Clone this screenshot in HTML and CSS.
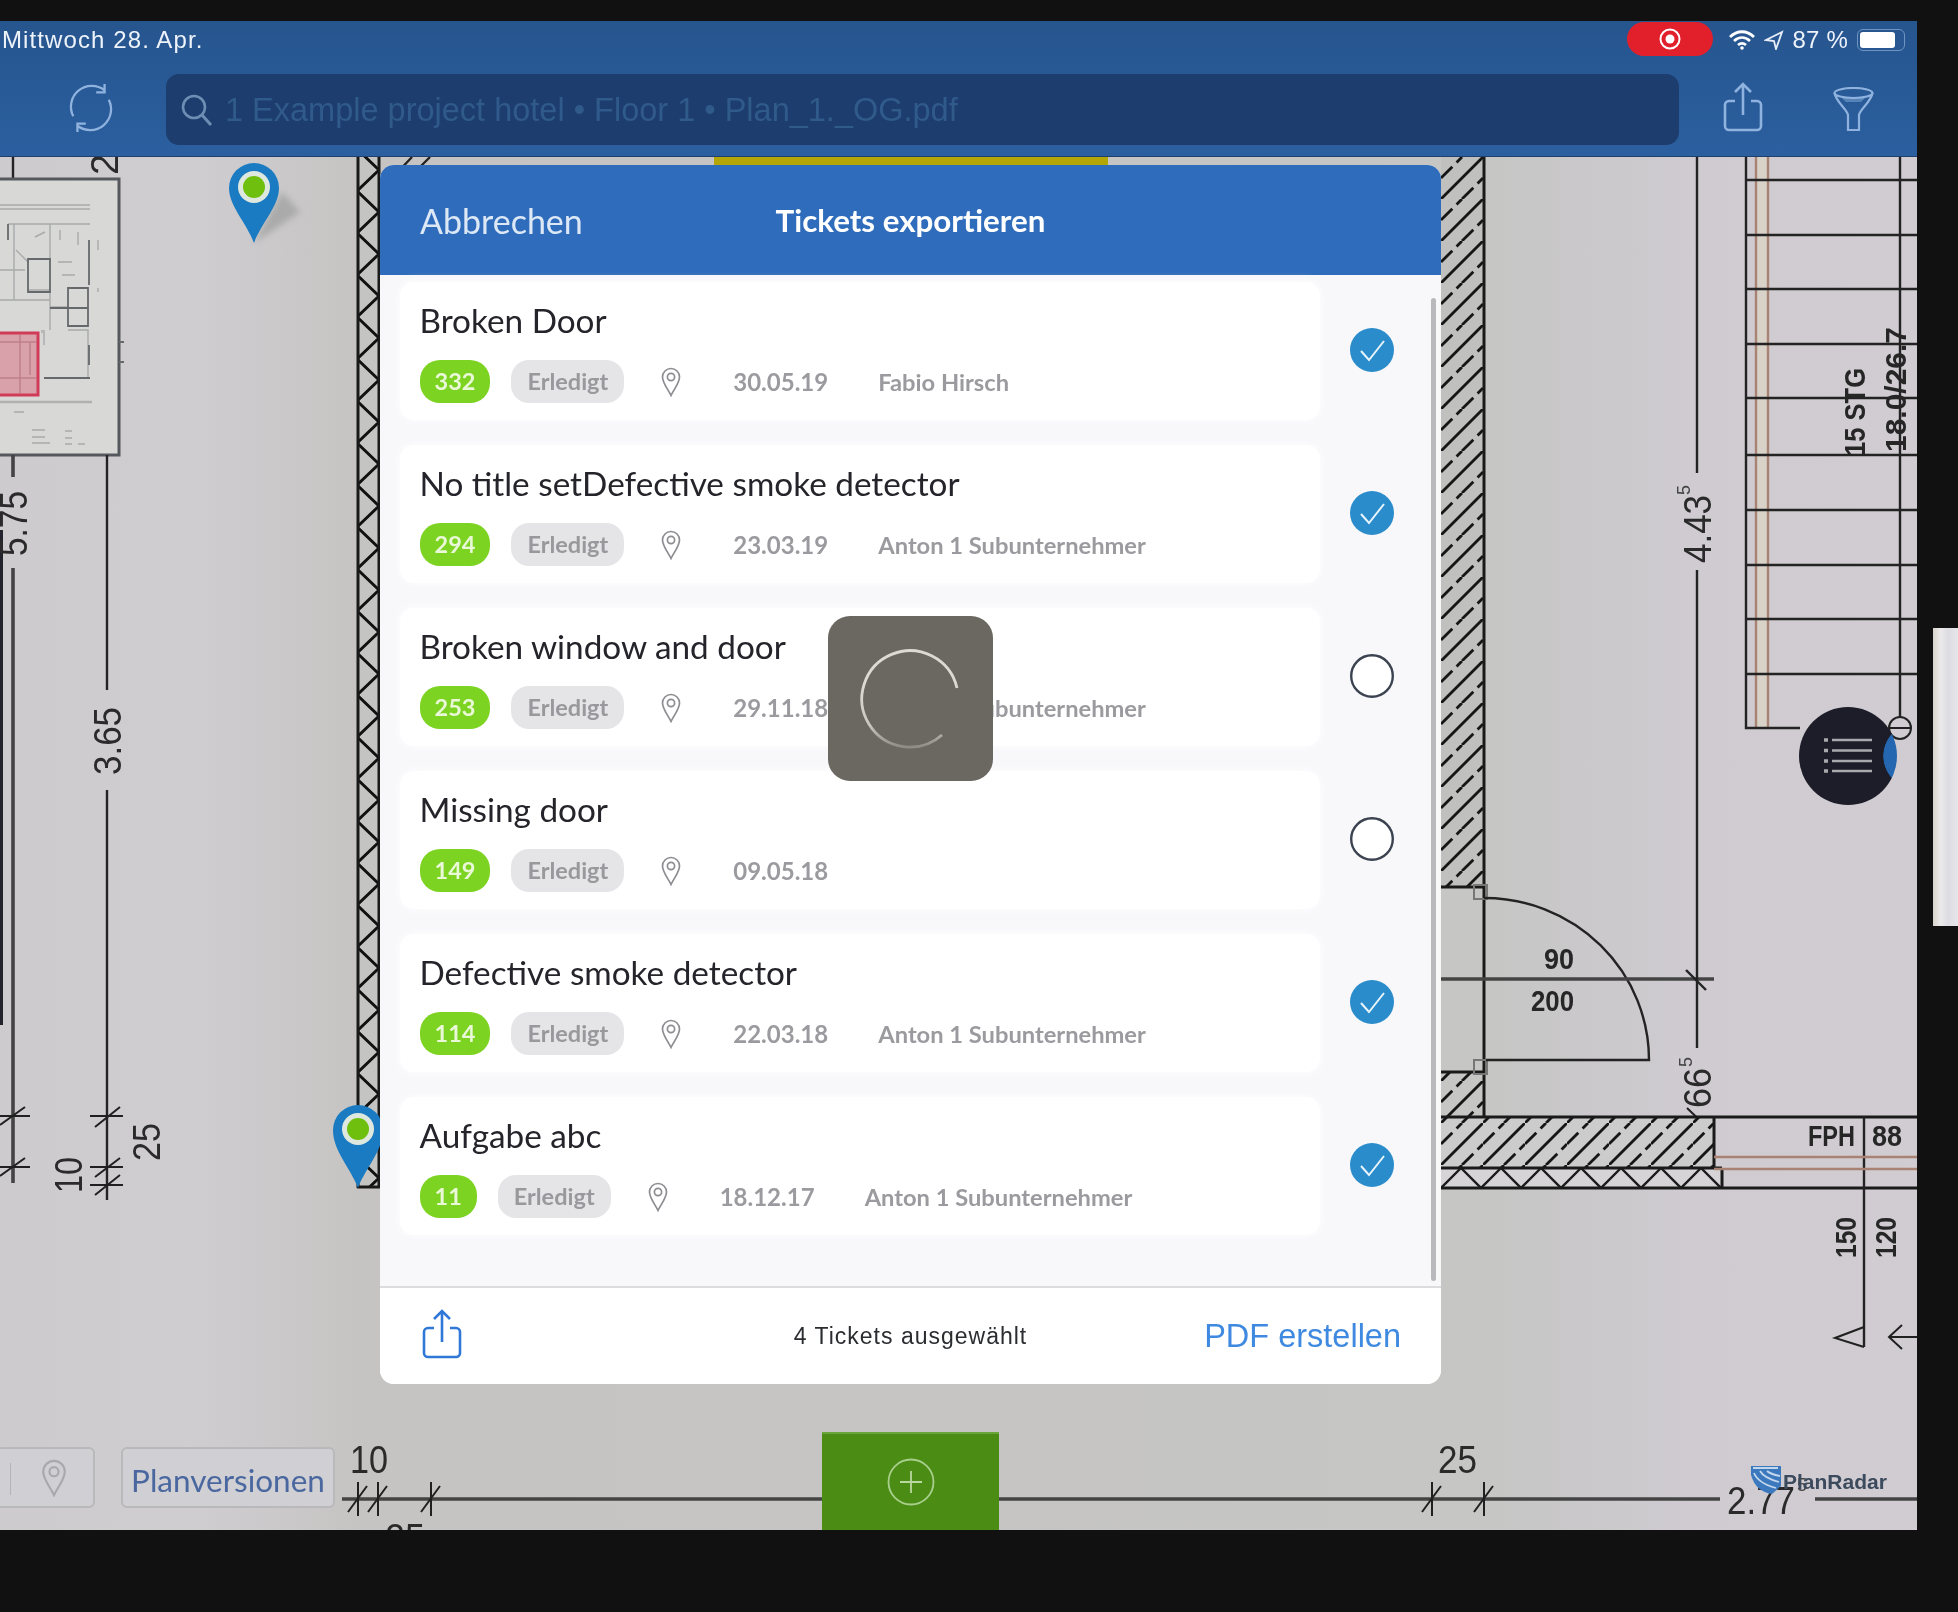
FILE: index.html
```html
<!DOCTYPE html>
<html lang="de">
<head>
<meta charset="utf-8">
<title>Tickets exportieren</title>
<link rel="stylesheet" href="styles.css">
</head>
<body class="page">
<svg class="defs" width="0" height="0" aria-hidden="true">
  <defs>
    <symbol id="i-share" viewBox="0 0 40 50">
      <path d="M12 19H6a4 4 0 0 0-4 4v21a4 4 0 0 0 4 4h28a4 4 0 0 0 4-4V23a4 4 0 0 0-4-4h-6" fill="none" stroke="currentColor" stroke-width="2.600"/>
      <path d="M20 33V2M12 10l8-8 8 8" fill="none" stroke="currentColor" stroke-width="2.600"/>
    </symbol>
    <symbol id="i-pin" viewBox="0 0 20 30">
      <path d="M10 28.500C7 22 1.500 16 1.500 10a8.500 8.500 0 0 1 17 0c0 6-5.500 12-8.500 18.500Z" fill="none" stroke="currentColor" stroke-width="1.700"/>
      <circle cx="10" cy="10" r="3.600" fill="none" stroke="currentColor" stroke-width="1.700"/>
    </symbol>
    <symbol id="i-check" viewBox="0 0 44 44">
      <circle cx="22" cy="22" r="22" fill="#2a8ccb"/>
      <path d="M11 23l8 9 15-19" fill="none" stroke="#e8f4fb" stroke-width="2"/>
    </symbol>
    <symbol id="i-radio" viewBox="0 0 44 44">
      <circle cx="22" cy="22" r="20.800" fill="#fff" stroke="#3b4250" stroke-width="2.400"/>
    </symbol>
    <pattern id="hatch" width="42" height="42" patternUnits="userSpaceOnUse" x="1441" y="157">
      <path d="M-2 44L44-2" stroke="#161616" stroke-width="2.800"/>
      <path d="M0 21L21 0M21 42L42 21" stroke="#161616" stroke-width="2.800" stroke-dasharray="16 6"/>
    </pattern>
    <pattern id="zig-v" width="22" height="42" patternUnits="userSpaceOnUse" x="357" y="443">
      <path d="M0 0L22 21L0 42" fill="none" stroke="#111" stroke-width="3"/>
    </pattern>
    <pattern id="zig-h" width="40" height="20" patternUnits="userSpaceOnUse" x="1441" y="1168">
      <path d="M0 20L20 0L40 20" fill="none" stroke="#1c1c1c" stroke-width="2.400"/>
    </pattern>
    <linearGradient id="paper" x1="0" x2="1" y1="0" y2="0">
      <stop offset="0" stop-color="#cdcbce"/>
      <stop offset=".1" stop-color="#d0cdd1"/>
      <stop offset=".19" stop-color="#c5c4c2"/>
      <stop offset=".78" stop-color="#c6c6c5"/>
      <stop offset=".88" stop-color="#cfcbd1"/>
      <stop offset="1" stop-color="#d0ccd2"/>
    </linearGradient>
    <linearGradient id="arc-fade" gradientUnits="userSpaceOnUse" x1="0" y1="70" x2="0" y2="135">
      <stop offset="0" stop-color="#dcdad4"/>
      <stop offset=".6" stop-color="#c9c7c1"/>
      <stop offset="1" stop-color="#85827c"/>
    </linearGradient>
  </defs>
</svg>

<main class="screen">
  <svg class="plan" viewBox="0 21 1917 1509" width="1917" height="1509">
    <rect x="0" y="21" width="1917" height="1509" fill="url(#paper)"/>

    <!-- key map -->
    <path class="ln-mid" d="M13 157V178"/>
    <rect class="mini" x="-4" y="179" width="123" height="276"/>
    <g class="mini-lines">
      <path d="M0 205H90M0 209H90"/>
      <path d="M8 224H90M14 224V300M50 224V259M28 290H50M0 270H25M0 300H50M16 250L28 262M35 237L45 232M60 230V240M78 232V245M58 262H72M62 275H75M50 292V330M50 307H68M42 330V333M68 330H88V378M44 345V330M98 240V250M98 288V292"/>
      <path d="M32 430H45M32 437H45M32 443H50M65 431H72M65 438H72M65 444H72M78 444H85M14 412H24"/>
    </g>
    <path class="mini-grey" d="M0 402H92"/>
    <path class="mini-dark" d="M8 224V240M89 240V285M28 259H50V292H28ZM68 288H88V326H68ZM50 308H88M89 345V365M44 378H90M44 378H62M119 342H124M119 362H124"/>
    <rect class="mini-red" x="-3" y="333" width="41" height="62"/>
    <path class="mini-red-in" d="M0 342H36M20 335V393M0 378H36M30 342V375"/>

    <!-- left dimensions -->
    <rect class="blk" x="0" y="530" width="3" height="495"/>
    <path class="ln-thick" d="M13 455V477M13 568V1183"/>
    <path class="ln-mid" d="M107 455V690M107 790V1200"/>
    <path class="ln-thin" d="M-5 1116H30M0 1125L25 1107M-5 1167H30M0 1176L25 1158"/>
    <path class="ln-thin" d="M90 1116H123M95 1127L120 1107M90 1167H123M90 1185H123M95 1177L120 1158M95 1195L120 1175"/>
    <text class="dim" transform="translate(27 556) rotate(-90)" textLength="65" lengthAdjust="spacingAndGlyphs">5.75</text>
    <text class="dim" transform="translate(121 775) rotate(-90)" textLength="68" lengthAdjust="spacingAndGlyphs">3.65</text>
    <text class="dim" transform="translate(82 1193) rotate(-90)" textLength="36" lengthAdjust="spacingAndGlyphs">10</text>
    <text class="dim" transform="translate(160 1161) rotate(-90)" textLength="38" lengthAdjust="spacingAndGlyphs">25</text>
    <text class="dim" transform="translate(118 175) rotate(-90)">2</text>

    <!-- left wall -->
    <rect x="357" y="157" width="23" height="1031" fill="#c4c5c3"/>
    <rect x="357" y="157" width="22" height="1031" fill="url(#zig-v)"/>
    <path class="ln-wall" d="M358 157V1188M379 157V1188M357 1187H382"/>
    <path class="ln-mid" d="M395 175L412 157M412 175L430 157"/>

    <!-- right wall and door -->
    <rect x="1441" y="157" width="43" height="730" fill="#c0c0bf"/>
    <rect x="1441" y="157" width="43" height="730" fill="url(#hatch)"/>
    <path class="ln-wall" d="M1484 157V1117M1441 887H1484"/>
    <rect x="1441" y="1072" width="43" height="45" fill="url(#hatch)"/>
    <path class="ln-wall" d="M1441 1072H1484"/>
    <rect class="sq" x="1474" y="885" width="13" height="14"/>
    <rect class="sq" x="1474" y="1060" width="13" height="14"/>
    <path class="ln-mid" d="M1484 898A165 162 0 0 1 1649 1060H1486"/>
    <path class="ln-thick" d="M1441 979H1714"/>
    <path class="ln-mid" d="M1686 970L1706 990"/>
    <text class="cad" x="1544" y="969" textLength="30" lengthAdjust="spacingAndGlyphs">90</text>
    <text class="cad" x="1531" y="1011" textLength="43" lengthAdjust="spacingAndGlyphs">200</text>

    <!-- vertical dimension right -->
    <path class="ln-mid" d="M1697 157V473M1697 570V1048"/>
    <text class="dim" transform="translate(1711 563) rotate(-90)" textLength="68" lengthAdjust="spacingAndGlyphs">4.43</text>
    <text class="dim-s" transform="translate(1690 495) rotate(-90)">5</text>
    <text class="dim" transform="translate(1711 1108) rotate(-90)" textLength="40" lengthAdjust="spacingAndGlyphs">66</text>
    <text class="dim-s" transform="translate(1692 1067) rotate(-90)">5</text>
    <path class="ln-thin" d="M1687 1108L1712 1132M1697 1118V1135"/>

    <!-- bottom walls -->
    <rect x="1441" y="1117" width="273" height="51" fill="#cdcccd"/>
    <rect x="1441" y="1117" width="273" height="51" fill="url(#hatch)"/>
    <rect x="1441" y="1168" width="281" height="20" fill="#d6d4d6"/>
    <rect x="1441" y="1168" width="281" height="20" fill="url(#zig-h)"/>
    <path class="ln-wall" d="M1441 1117H1917M1441 1168H1722M1441 1188H1917M1714 1117V1168M1722 1168V1188"/>
    <path class="ln-mid" d="M1864 1117V1347"/>
    <path class="ln-brown" d="M1714 1157H1917M1714 1169H1917"/>
    <text class="cad" x="1808" y="1146" textLength="47" lengthAdjust="spacingAndGlyphs">FPH</text>
    <text class="cad" x="1872" y="1146" textLength="30" lengthAdjust="spacingAndGlyphs">88</text>
    <text class="cad" transform="translate(1856 1258) rotate(-90)" textLength="41" lengthAdjust="spacingAndGlyphs">150</text>
    <text class="cad" transform="translate(1896 1258) rotate(-90)" textLength="41" lengthAdjust="spacingAndGlyphs">120</text>
    <path class="ln-thin" d="M1864 1327L1835 1338L1864 1347M1917 1337H1889M1902 1325L1889 1337L1902 1349"/>

    <!-- stairs -->
    <rect x="1756" y="157" width="12" height="571" fill="#d9d2c8"/>
    <path class="ln-brown" d="M1756 157V728M1768 157V728"/>
    <path class="ln-mid" d="M1746 157V728H1800M1900 157V717"/>
    <path class="ln-mid" d="M1746 180H1917M1746 235H1917M1746 289H1917M1746 344H1917M1746 398H1917M1746 455H1917M1746 510H1917M1746 565H1917M1746 619H1917M1746 674H1917"/>
    <path class="ln-thin" d="M1889 728H1911"/>
    <circle class="open" cx="1900" cy="728" r="11"/>
    <text class="cad" transform="translate(1865 456) rotate(-90)" textLength="88" lengthAdjust="spacingAndGlyphs">15 STG</text>
    <text class="cad" transform="translate(1906 452) rotate(-90)" textLength="125" lengthAdjust="spacingAndGlyphs">18.0/26.7</text>

    <!-- map pins -->
    <path class="pin-shadow" d="M254 243L300 212L282 192Z"/>
    <path class="pin" d="M254 243C246 222 229 206 229 188a25 25 0 0 1 50 0C279 206 262 222 254 243Z"/>
    <circle class="pin-ring" cx="254" cy="187" r="16"/>
    <circle class="pin-dot" cx="254" cy="187" r="11"/>
    <path class="pin" d="M358 1188C350 1167 333 1151 333 1130a25 25 0 0 1 50 0C383 1151 366 1167 358 1188Z"/>
    <circle class="pin-ring" cx="358" cy="1129" r="16"/>
    <circle class="pin-dot" cx="358" cy="1129" r="11"/>

    <!-- bottom dimension -->
    <path class="ln-thick" d="M342 1499H1720M1815 1499H1917"/>
    <path class="ln-thin" d="M358 1482V1516M348 1512L367 1486M378 1482V1516M368 1512L387 1486M431 1482V1516M421 1512L440 1486M1432 1482V1516M1422 1512L1441 1486M1484 1482V1516M1474 1512L1493 1486"/>
    <text class="dim" x="350" y="1473" textLength="38" lengthAdjust="spacingAndGlyphs">10</text>
    <text class="dim" x="1438" y="1473" textLength="39" lengthAdjust="spacingAndGlyphs">25</text>
    <text class="dim" x="385" y="1551" textLength="40" lengthAdjust="spacingAndGlyphs">25</text>
    <text class="dim" x="1727" y="1514" textLength="68" lengthAdjust="spacingAndGlyphs">2.77</text>
    <text class="dim-s" x="1797" y="1491">5</text>
  </svg>

  <header class="toolbar">
    <div class="status">
      <span class="status-date">Mittwoch 28. Apr.</span>
      <div class="status-right">
        <span class="rec"><svg width="22" height="22" viewBox="0 0 22 22"><circle cx="11" cy="11" r="9.500" fill="none" stroke="#fff" stroke-width="2"/><circle cx="11" cy="11" r="4.500" fill="#fff"/></svg></span>
        <svg class="wifi" width="26" height="20" viewBox="0 0 26 20"><path d="M1 7c7-7 17-7 24 0M5 11c5-4.500 11-4.500 16 0M9 15c2.500-2 5.500-2 8 0" fill="none" stroke="#fff" stroke-width="2.800"/><circle cx="13" cy="18" r="1.800" fill="#fff"/></svg>
        <svg class="loc" width="20" height="20" viewBox="0 0 20 20"><path d="M18 2L2 10l8 1 2 8Z" fill="none" stroke="#e7eef7" stroke-width="1.800"/></svg>
        <span class="batt-text">87 %</span>
        <span class="battery"><span class="battery-fill"></span></span>
      </div>
    </div>
    <div class="tools">
      <svg class="tool-refresh" width="48" height="48" viewBox="0 0 46 46"><path d="M6 31A20 20 0 0 1 36 6M40 15A20 20 0 0 1 10 40M36 0V8H28M10 46V38H18" fill="none" stroke="currentColor" stroke-width="2.200"/></svg>
      <div class="search">
        <svg width="32" height="32" viewBox="0 0 32 32"><circle cx="13" cy="13" r="11" fill="none" stroke="currentColor" stroke-width="2.600"/><path d="M21 21l9 10" stroke="currentColor" stroke-width="3"/></svg>
        <span class="search-text">1 Example project hotel • Floor 1 • Plan_1._OG.pdf</span>
      </div>
      <svg class="tool-share"><use href="#i-share"/></svg>
      <svg class="tool-filter" width="41" height="44" viewBox="0 0 41 44"><ellipse cx="20.500" cy="6" rx="19" ry="5" fill="none" stroke="currentColor" stroke-width="2.200"/><path d="M1.500 6C3 15 14 22 15 28V43H26V28C27 22 38 15 39.500 6" fill="none" stroke="currentColor" stroke-width="2.200"/><path d="M7 9c8 4 19 4 27 0L28 15H13Z" fill="currentColor" opacity=".45"/></svg>
    </div>
  </header>

  <div class="loading-strip"></div>

  <nav class="plan-tabs">
    <div class="tab tab-pin"><span class="tab-divider"></span><svg class="tab-pin-icon"><use href="#i-pin"/></svg></div>
    <div class="tab tab-label">Planversionen</div>
  </nav>

  <div class="add-btn"><svg width="48" height="48" viewBox="0 0 48 48"><circle cx="24" cy="24" r="22.500" fill="none" stroke="#a9cf8c" stroke-width="1.800"/><path d="M24 13V35M13 24H35" stroke="#b8d8a0" stroke-width="1.800"/></svg></div>

  <section class="modal">
    <header class="modal-head">
      <span class="modal-cancel">Abbrechen</span>
      <span class="modal-title">Tickets exportieren</span>
    </header>
    <div class="list">
      <article class="row">
        <div class="card">
          <h3 class="title">Broken Door</h3>
          <div class="meta"><span class="num">332</span><span class="state">Erledigt</span><svg class="meta-pin"><use href="#i-pin"/></svg><span class="date">30.05.19</span><span class="who">Fabio Hirsch</span></div>
        </div>
        <svg class="check"><use href="#i-check"/></svg>
      </article>
      <article class="row">
        <div class="card">
          <h3 class="title">No title setDefective smoke detector</h3>
          <div class="meta"><span class="num">294</span><span class="state">Erledigt</span><svg class="meta-pin"><use href="#i-pin"/></svg><span class="date">23.03.19</span><span class="who">Anton 1 Subunternehmer</span></div>
        </div>
        <svg class="check"><use href="#i-check"/></svg>
      </article>
      <article class="row">
        <div class="card">
          <h3 class="title">Broken window and door</h3>
          <div class="meta"><span class="num">253</span><span class="state">Erledigt</span><svg class="meta-pin"><use href="#i-pin"/></svg><span class="date">29.11.18</span><span class="who">Anton 1 Subunternehmer</span></div>
        </div>
        <svg class="check"><use href="#i-radio"/></svg>
      </article>
      <article class="row">
        <div class="card">
          <h3 class="title">Missing door</h3>
          <div class="meta"><span class="num">149</span><span class="state">Erledigt</span><svg class="meta-pin"><use href="#i-pin"/></svg><span class="date">09.05.18</span></div>
        </div>
        <svg class="check"><use href="#i-radio"/></svg>
      </article>
      <article class="row">
        <div class="card">
          <h3 class="title">Defective smoke detector</h3>
          <div class="meta"><span class="num">114</span><span class="state">Erledigt</span><svg class="meta-pin"><use href="#i-pin"/></svg><span class="date">22.03.18</span><span class="who">Anton 1 Subunternehmer</span></div>
        </div>
        <svg class="check"><use href="#i-check"/></svg>
      </article>
      <article class="row">
        <div class="card">
          <h3 class="title">Aufgabe abc</h3>
          <div class="meta"><span class="num">11</span><span class="state">Erledigt</span><svg class="meta-pin"><use href="#i-pin"/></svg><span class="date">18.12.17</span><span class="who">Anton 1 Subunternehmer</span></div>
        </div>
        <svg class="check"><use href="#i-check"/></svg>
      </article>
      <span class="scrollbar"></span>
    </div>
    <footer class="modal-foot">
      <svg class="foot-share"><use href="#i-share"/></svg>
      <span class="foot-count">4 Tickets ausgewählt</span>
      <span class="foot-action">PDF erstellen</span>
    </footer>
  </section>

  <div class="spinner">
    <svg width="165" height="165" viewBox="0 0 165 165"><path d="M129 72A48.200 48.200 0 1 0 114 119" fill="none" stroke="url(#arc-fade)" stroke-width="2.800"/></svg>
  </div>

  <button class="fab" type="button" aria-label="Liste">
    <svg width="56" height="44" viewBox="0 0 56 44"><path d="M14 6H54M14 16.500H54M14 27H54M14 37H54" stroke="#a9a9ae" stroke-width="2.600"/><path d="M6 6H10M6 16.500H10M6 27H10M6 37H10" stroke="#a9a9ae" stroke-width="3.500"/></svg>
  </button>

  <div class="watermark">
    <svg width="32" height="30" viewBox="0 0 32 30"><path d="M1 1H31V21L22 29Q6 27 1 10Z" fill="#3c78bd"/><path d="M3 3H28M4 8Q8 18 26 23M10 6Q14 13 29 17M17 6Q20 9 30 11" fill="none" stroke="#c3d7ec" stroke-width="1.800"/></svg>
    <span class="watermark-text">PlanRadar</span>
  </div>
</main>

<aside class="sliver"></aside>
</body>
</html>
```

FILE: styles.css
```css
* { box-sizing: border-box; }
html, body { margin: 0; padding: 0; }
.page {
  display: flex;
  align-items: flex-start;
  width: 1958px;
  height: 1612px;
  overflow: hidden;
  padding-top: 21px;
  background: #111112;
  font-family: "Lato", "Liberation Sans", sans-serif;
}
.defs { position: absolute; }

.screen {
  position: relative;
  flex: 0 0 1917px;
  height: 1509px;
  overflow: hidden;
  filter: blur(.55px);
}
.sliver {
  flex: 0 0 25px;
  height: 298px;
  margin: 607px 0 0 16px;
  background: linear-gradient(90deg, #d8d4cc 0, #eceaea 30%, #dcdce2 60%, #e6e6ea 100%);
}

/* plan drawing */
.plan { position: absolute; left: 0; top: 0; display: block; }
.plan path { fill: none; }
.ln-thin { stroke: #202020; stroke-width: 2; }
.ln-mid { stroke: #232323; stroke-width: 2.400; }
.ln-thick { stroke: #444; stroke-width: 3.600; }
.ln-wall { stroke: #1a1a1a; stroke-width: 3; }
.ln-brown { stroke: #a88273; stroke-width: 2.400; }
.blk { fill: #22232c; }
.sq { fill: none; stroke: #777; stroke-width: 2; }
.open { fill: none; stroke: #222; stroke-width: 2; }
.mini { fill: #d8d8d6; stroke: #55585c; stroke-width: 3; }
.mini-lines path { stroke: #a8aaab; stroke-width: 1.400; }
.mini-grey { stroke: #b0b2b2; stroke-width: 2.500; }
.mini-dark { stroke: #66696c; stroke-width: 1.800; }
.mini-red { fill: #d9a1a9; stroke: #d23b58; stroke-width: 3; }
.mini-red-in { stroke: #bf808b; stroke-width: 1.500; }
.dim { font: 400 38px "Liberation Sans", sans-serif; fill: #2a2a2a; }
.dim-s { font: 400 18px "Liberation Sans", sans-serif; fill: #444; }
.cad { font: 700 30px "Liberation Sans", sans-serif; fill: #262626; }
.plan .pin { fill: #1a7bc2; }
.plan .pin-shadow { fill: #aaa; filter: blur(3px); }
.pin-ring { fill: #dfe8df; }
.pin-dot { fill: #6fbf0e; }

/* top bars */
.toolbar {
  position: relative;
  height: 136px;
  background: linear-gradient(180deg, #27558e 0, #285a97 50%, #2c5f9f 100%);
  border-bottom: 1px solid #1f3f6c;
}
.status {
  display: flex;
  align-items: center;
  justify-content: space-between;
  height: 36px;
  padding: 2px 12px 0 2px;
  color: #eef3fa;
  font: 400 24px "Liberation Sans", sans-serif;
}
.status-date { letter-spacing: 1.100px; }
.status-right { display: flex; align-items: center; }
.rec {
  display: flex;
  align-items: center;
  justify-content: center;
  width: 86px;
  height: 34px;
  margin-top: -2px;
  border-radius: 17px;
  background: #e2202c;
}
.wifi { margin-left: 16px; }
.loc { margin-left: 9px; }
.batt-text { margin-left: 8px; letter-spacing: .2px; }
.battery {
  display: flex;
  width: 48px;
  height: 22px;
  margin-left: 9px;
  padding: 2px 9px 2px 2px;
  border: 1.500px solid #6f94c2;
  border-radius: 6px;
}
.battery-fill { flex: 1; background: #fff; border-radius: 3px; }
.tools {
  display: flex;
  align-items: flex-start;
  height: 100px;
  padding: 17px 0 0 67px;
  color: #8fb3de;
}
.tool-refresh { margin: 10px 51px 0 0; }
.search {
  display: flex;
  align-items: center;
  width: 1513px;
  height: 71px;
  padding: 0 0 0 15px;
  border-radius: 13px;
  background: #1c3d6d;
  color: #6d8db3;
}
.search-text {
  margin: 2px 0 0 12px;
  font: 400 32.500px "Liberation Sans", sans-serif;
  color: #305a8a;
  white-space: nowrap;
}
.tool-share { width: 40px; height: 50px; margin: 8px 0 0 44px; }
.tool-filter { margin: 13px 0 0 70px; }
.loading-strip {
  position: absolute;
  left: 714px;
  top: 136px;
  width: 394px;
  height: 8px;
  background: #b3a606;
}

/* bottom controls */
.plan-tabs {
  position: absolute;
  left: -4px;
  top: 1426px;
  display: flex;
  gap: 26px;
}
.tab {
  height: 61px;
  border: 2px solid #b9b8bb;
  border-radius: 6px;
  background: #d0cfd3;
}
.tab-pin { position: relative; width: 99px; }
.tab-divider { position: absolute; left: 12px; top: 14px; width: 1px; height: 32px; background: #b5b4b7; }
.tab-pin-icon { position: absolute; left: 43px; top: 10px; width: 26px; height: 38px; color: #a9a9ad; }
.tab-label {
  width: 214px;
  text-align: center;
  line-height: 62px;
  font-size: 31.500px;
  color: #4a689f;
}
.add-btn {
  position: absolute;
  left: 822px;
  top: 1411px;
  display: flex;
  align-items: center;
  justify-content: center;
  width: 177px;
  height: 98px;
  background: #4b8c14;
  border-top: 2px solid #69a53a;
}
.fab {
  position: absolute;
  left: 1799px;
  top: 686px;
  display: flex;
  align-items: center;
  justify-content: center;
  width: 98px;
  height: 98px;
  padding: 0 4px 0 0;
  border: 0;
  border-radius: 50%;
  background: radial-gradient(circle 33px at 117px 49px, #2566b0 98%, #1c1d28 100%);
}
.watermark {
  position: absolute;
  left: 1750px;
  top: 1444px;
  display: flex;
  align-items: center;
}
.watermark-text {
  margin: 3px 0 0 1px;
  font: 700 21px "Liberation Sans", sans-serif;
  color: #3b4a5c;
}

/* modal */
.modal {
  position: absolute;
  left: 380px;
  top: 144px;
  display: flex;
  flex-direction: column;
  width: 1061px;
  height: 1219px;
  overflow: hidden;
  border-radius: 14px;
  background: #f8f7fa;
}
.modal-head {
  position: relative;
  flex: 0 0 110px;
  display: flex;
  align-items: center;
  justify-content: center;
  background: #2f6cbb;
  color: #fff;
}
.modal-cancel {
  position: absolute;
  left: 40px;
  font-size: 34px;
  color: #dde8f6;
}
.modal-title { font-size: 31.300px; font-weight: 700; }
.list {
  position: relative;
  flex: 1;
  display: flex;
  flex-direction: column;
  gap: 25px;
  padding: 7px 0 0 20px;
}
.row { display: flex; align-items: center; }
.card {
  width: 920px;
  height: 138px;
  padding: 18px 0 0 19.500px;
  border-radius: 14px;
  background: #fff;
  box-shadow: 0 0 10px #fff;
}
.title {
  margin: 0;
  font-size: 33.300px;
  font-weight: 400;
  line-height: 40px;
  color: #24242a;
}
.meta { display: flex; align-items: center; margin-top: 20px; height: 43px; font-size: 24px; }
.num {
  height: 43px;
  padding: 0 15px;
  border-radius: 20px;
  background: #7dd321;
  color: #e9f8d6;
  font-size: 23.500px;
  font-weight: 700;
  line-height: 43px;
}
.state {
  height: 43px;
  margin-left: 21px;
  padding: 0 16px;
  border-radius: 18px;
  background: #e5e4e7;
  color: #98989d;
  font-size: 23.500px;
  font-weight: 700;
  line-height: 43px;
}
.meta-pin { width: 20px; height: 30px; margin: 0 52px 0 37px; color: #8d8d92; }
.date { width: 93px; color: #9a9a9f; font-weight: 700; white-space: nowrap; }
.who { margin-left: 52px; font-size: 23.700px; color: #9a9a9f; font-weight: 700; white-space: nowrap; }
.check { width: 44px; height: 44px; margin: -2px 0 0 30px; }
.scrollbar {
  position: absolute;
  left: 1051px;
  top: 23px;
  width: 5px;
  height: 983px;
  border-radius: 3px;
  background: #b8b8bd;
}
.modal-foot {
  position: relative;
  flex: 0 0 98px;
  display: flex;
  align-items: center;
  justify-content: center;
  border-top: 2px solid #dcdbe0;
  background: #fff;
}
.foot-share { position: absolute; left: 42px; top: 21px; width: 40px; height: 50px; color: #2f78d8; }
.foot-count { font: 400 23px "Liberation Sans", sans-serif; letter-spacing: 1px; color: #2a2c30; }
.foot-action { position: absolute; right: 40px; font: 400 32.500px "Liberation Sans", sans-serif; color: #3f8ae0; }

.spinner {
  position: absolute;
  left: 828px;
  top: 595px;
  width: 165px;
  height: 165px;
  border-radius: 22px;
  background: #6b6862;
}
.spinner svg { display: block; }
```
